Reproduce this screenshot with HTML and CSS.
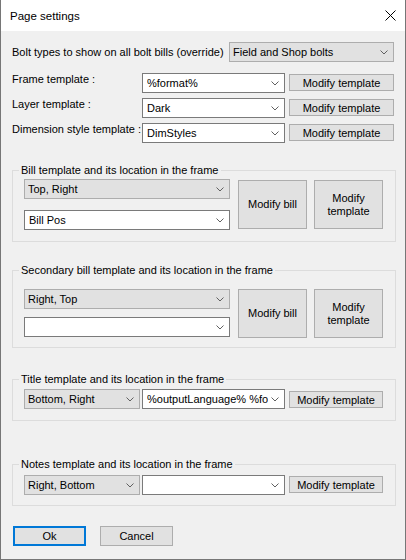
FILE: index.html
```html
<!doctype html>
<html lang="en">
  <head>
    <meta charset="UTF-8" />
    <meta name="viewport" content="width=device-width, initial-scale=1.0" />
    <title>Page settings</title>
    <link rel="stylesheet" href="styles.css">
  </head>
  <body>
    <div class="dialog">
      <div class="titlebar">
        <span class="title">Page settings</span>
        <button class="close" type="button" aria-label="Close">
          <svg width="11" height="11" viewBox="0 0 11 11">
            <path d="M0.5 0.5l10 10M10.5 0.5l-10 10" stroke="#000" stroke-width="1" fill="none" />
          </svg>
        </button>
      </div>

      <form class="content">
        <div class="override">
          <label for="bolt-types">Bolt types to show on all bolt bills (override)</label>
          <select id="bolt-types" class="gray">
            <option>Field and Shop bolts</option>
          </select>
        </div>

        <div class="templates">
          <label for="frame">Frame template :</label>
          <select id="frame"><option>%format%</option></select>
          <button type="button">Modify template</button>

          <label for="layer">Layer template :</label>
          <select id="layer"><option>Dark</option></select>
          <button type="button">Modify template</button>

          <label for="dimstyle">Dimension style template :</label>
          <select id="dimstyle"><option>DimStyles</option></select>
          <button type="button">Modify template</button>
        </div>

        <fieldset class="group bill">
          <legend>Bill template and its location in the frame</legend>
          <div class="pickers">
            <select class="gray" aria-label="Bill location"><option>Top, Right</option></select>
            <select aria-label="Bill template"><option>Bill Pos</option></select>
          </div>
          <button type="button" class="tall">Modify bill</button>
          <button type="button" class="tall">Modify<br>template</button>
        </fieldset>

        <fieldset class="group bill secondary">
          <legend>Secondary bill template and its location in the frame</legend>
          <div class="pickers">
            <select class="gray" aria-label="Secondary bill location"><option>Right, Top</option></select>
            <select aria-label="Secondary bill template"><option></option></select>
          </div>
          <button type="button" class="tall">Modify bill</button>
          <button type="button" class="tall">Modify<br>template</button>
        </fieldset>

        <fieldset class="group single title-block">
          <legend>Title template and its location in the frame</legend>
          <select class="gray pos" aria-label="Title location"><option>Bottom, Right</option></select>
          <select class="name" aria-label="Title template"><option>%outputLanguage% %format%</option></select>
          <button type="button">Modify template</button>
        </fieldset>

        <fieldset class="group single notes">
          <legend>Notes template and its location in the frame</legend>
          <select class="gray pos" aria-label="Notes location"><option>Right, Bottom</option></select>
          <select class="name" aria-label="Notes template"><option></option></select>
          <button type="button">Modify template</button>
        </fieldset>

        <div class="actions">
          <button type="submit" class="default">Ok</button>
          <button type="button">Cancel</button>
        </div>
      </form>
    </div>
  </body>
</html>
```

FILE: styles.css
```css
*,
*:before,
*:after {
  box-sizing: border-box;
}

body {
  margin: 0;
  color: #000;
  font: 11px "Liberation Sans", Arial, sans-serif;
}

.dialog {
  display: flex;
  flex-direction: column;
  width: 406px;
  height: 560px;
  border: 1px solid #767676;
  border-top: 0;
  background-color: #f0f0f0;
}

.titlebar {
  display: flex;
  flex: none;
  align-items: center;
  justify-content: space-between;
  height: 31px;
  padding: 0 9px;
  background-color: #fff;
}

.title {
  font-size: 11.5px;
}

.close {
  height: auto;
  padding: 0;
  border: 0;
  background: none;

  & svg {
    display: block;
  }
}

.content {
  flex: 1;
  margin: 0;
  padding: 0 11px;
}

select {
  appearance: none;
  height: 20px;
  margin: 0;
  padding: 0 16px 0 4px;
  border: 1px solid #7a7a7a;
  border-radius: 0;
  background: #fff url("data:image/svg+xml,%3Csvg xmlns='http://www.w3.org/2000/svg' width='8' height='5' viewBox='0 0 8 5'%3E%3Cpath d='M.5.5 4 4 7.5.5' fill='none' stroke='%23606060'/%3E%3C/svg%3E") no-repeat right 5px center;
  color: inherit;
  font: inherit;

  &.gray {
    padding-left: 3px;
    border-color: #adadad;
    background-color: #e1e1e1;
  }
}

button {
  height: 17px;
  margin: 0;
  padding: 0;
  border: 1px solid #adadad;
  border-radius: 0;
  background-color: #e1e1e1;
  color: inherit;
  font: inherit;
}

/* Bolt type override row */
.override {
  display: flex;
  align-items: center;
  justify-content: space-between;
  margin-top: 11px;

  & select {
    width: 165px;
  }
}

/* Frame / layer / dimension template rows */
.templates {
  display: grid;
  grid-template-columns: 130px 143px 1fr;
  grid-auto-rows: 20px;
  row-gap: 5px;
  margin-top: 11px;

  & label {
    align-self: start;
    margin-top: -1px;
    line-height: 14px;
  }

  & button {
    align-self: start;
    margin: 1px 0 0 4px;
  }
}

/* Group boxes */
.group {
  display: flex;
  align-items: flex-start;
  min-width: 0;
  margin: 20px -2px 0 0;
  padding: 1px 11px 11px;
  border: 1px solid #dcdcdc;

  & legend {
    margin-left: -5px;
    padding: 0 2px;
    line-height: 15px;
  }
}

.bill {
  & .pickers {
    display: flex;
    flex-direction: column;
    gap: 11px;
    width: 206px;
  }

  & select {
    width: 100%;
  }

  & .tall {
    width: 69px;
    height: 49px;
    margin: 1px 0 0 8px;
    line-height: 13px;
  }

  & .tall + .tall {
    margin-left: 7px;
  }
}

.secondary {
  margin-top: 21px;
  padding-top: 11px;
  padding-bottom: 9px;

  & .pickers {
    gap: 8px;
  }

  & .tall {
    margin-top: 0;
  }
}

.single {
  & .pos {
    width: 116px;
  }

  & .name {
    width: 143px;
    margin-left: 2px;
  }

  & button {
    width: 94px;
    margin: 2px 0 0 4px;
  }
}

.title-block {
  margin-top: 24px;
  padding-top: 2px;
}

.notes {
  margin-top: 36px;
  padding-top: 3px;
  padding-bottom: 10px;

  & button {
    margin-top: 1px;
  }
}

/* Dialog buttons */
.actions {
  display: flex;
  gap: 14px;
  margin-top: 20px;
  padding-left: 1px;

  & button {
    width: 73px;
    height: 20px;
  }

  & .default {
    border: 2px solid #0078d7;
  }
}
```
